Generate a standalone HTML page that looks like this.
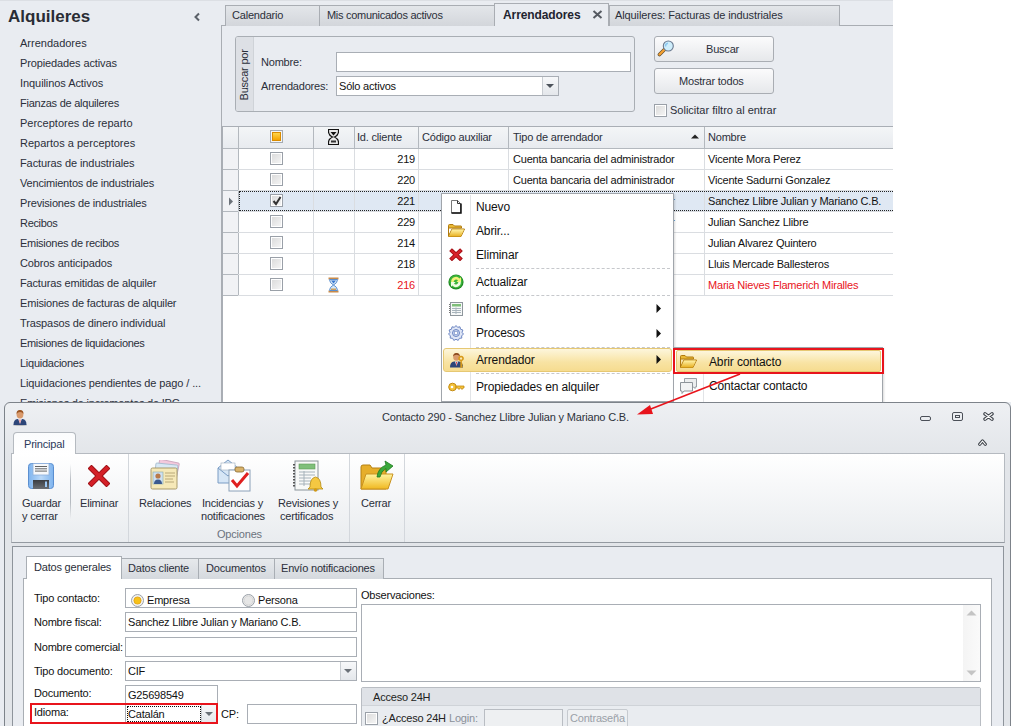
<!DOCTYPE html>
<html><head><meta charset="utf-8">
<style>
*{box-sizing:border-box;margin:0;padding:0}
html,body{width:1016px;height:726px;overflow:hidden;background:#e9ecf1;font-family:"Liberation Sans",sans-serif;font-size:11px;color:#1e1e1e;position:relative}
.a{position:absolute}
.t{position:absolute;line-height:13px;white-space:nowrap;letter-spacing:-0.2px}
.side{color:#2b2f3a}
.tab{position:absolute;top:5px;height:21px;border:1px solid #a9adb3;border-bottom:none;background:linear-gradient(#e3e6ea,#d3d6db)}
.inp{position:absolute;background:#fff;border:1px solid #a9aeb5}
.btn{position:absolute;border:1px solid #a9adb3;border-radius:3px;background:linear-gradient(#fbfbfc,#e6e8eb)}
.cb{position:absolute;width:13px;height:13px;border:1px solid #9aa0a8;background:#fff}
.cb::after{content:"";position:absolute;left:1px;top:1px;right:1px;bottom:1px;background:linear-gradient(135deg,#dcdcdc,#f4f4f4)}
</style></head><body>
<!-- top strip -->
<div class="a" style="left:0;top:0;width:893px;height:1px;background:#dcdfe4"></div>
<div class="a" style="left:893px;top:0;width:123px;height:402px;background:#fff"></div>

<!-- SIDEBAR -->
<div class="t" style="left:8px;top:7px;font-size:17px;font-weight:bold;line-height:20px;letter-spacing:0;color:#2a2d35">Alquileres</div>
<svg class="a" style="left:193px;top:12px" width="8" height="10" viewBox="0 0 8 10"><path d="M6 1.5 L2.5 5 L6 8.5" stroke="#5b6169" stroke-width="2" fill="none"/></svg>
<div class="t side" style="left:20px;top:37px;letter-spacing:0.000px">Arrendadores</div>
<div class="t side" style="left:20px;top:57px;letter-spacing:-0.117px">Propiedades activas</div>
<div class="t side" style="left:20px;top:77px;letter-spacing:-0.071px">Inquilinos Activos</div>
<div class="t side" style="left:20px;top:97px;letter-spacing:-0.240px">Fianzas de alquileres</div>
<div class="t side" style="left:20px;top:117px;letter-spacing:0.000px">Perceptores de reparto</div>
<div class="t side" style="left:20px;top:137px;letter-spacing:0.010px">Repartos a perceptores</div>
<div class="t side" style="left:20px;top:157px;letter-spacing:-0.096px">Facturas de industriales</div>
<div class="t side" style="left:20px;top:177px;letter-spacing:-0.193px">Vencimientos de industriales</div>
<div class="t side" style="left:20px;top:197px;letter-spacing:-0.158px">Previsiones de industriales</div>
<div class="t side" style="left:20px;top:217px;letter-spacing:-0.317px">Recibos</div>
<div class="t side" style="left:20px;top:237px;letter-spacing:-0.274px">Emisiones de recibos</div>
<div class="t side" style="left:20px;top:257px;letter-spacing:-0.118px">Cobros anticipados</div>
<div class="t side" style="left:20px;top:277px;letter-spacing:-0.154px">Facturas emitidas de alquiler</div>
<div class="t side" style="left:20px;top:297px;letter-spacing:-0.172px">Emisiones de facturas de alquiler</div>
<div class="t side" style="left:20px;top:317px;letter-spacing:-0.117px">Traspasos de dinero individual</div>
<div class="t side" style="left:20px;top:337px;letter-spacing:-0.316px">Emisiones de liquidaciones</div>
<div class="t side" style="left:20px;top:357px;letter-spacing:-0.258px">Liquidaciones</div>
<div class="t side" style="left:20px;top:377px;letter-spacing:-0.114px">Liquidaciones pendientes de pago / ...</div>
<div class="t side" style="left:20px;top:397px">Emisiones de incrementos de IPC</div>

<!-- TABS -->
<div class="a" style="left:221px;top:25px;width:672px;height:1px;background:#a9adb3"></div>
<div class="a" style="left:221px;top:25px;width:1px;height:377px;background:#a9adb3"></div>
<div class="tab" style="left:225px;width:95px"></div>
<div class="t" style="left:232px;top:9px;color:#2b2f3a">Calendario</div>
<div class="tab" style="left:319px;width:176px"></div>
<div class="t" style="left:327px;top:9px;letter-spacing:-0.29px;color:#2b2f3a">Mis comunicados activos</div>
<div class="tab" style="left:609px;width:231px"></div>
<div class="t" style="left:615px;top:9px;letter-spacing:-0.1px;color:#2b2f3a">Alquileres: Facturas de industriales</div>
<div class="a" style="left:494px;top:3px;width:115px;height:23px;border:1px solid #a9adb3;border-bottom:none;background:#e9ecf1"></div>
<div class="t" style="left:503px;top:8px;font-weight:bold;font-size:12px;line-height:14px;letter-spacing:-0.1px;color:#1f2430">Arrendadores</div>
<svg class="a" style="left:592px;top:10px" width="11" height="9" viewBox="0 0 11 9"><path d="M1.5 1 L9.5 8 M9.5 1 L1.5 8" stroke="#555a62" stroke-width="2"/></svg>

<!-- SEARCH GROUP -->
<div class="a" style="left:235px;top:36px;width:400px;height:76px;border:1px solid #a9aeb4;border-radius:3px"></div>
<div class="a" style="left:236px;top:37px;width:18px;height:74px;background:#dde0e5;border-right:1px solid #cfd3d8;border-radius:2px 0 0 2px"></div>
<div class="t" style="left:222px;top:72px;width:44px;transform:rotate(-90deg);color:#2b2f3a">Buscar por</div>
<div class="t" style="left:261px;top:56px;color:#2b2f3a">Nombre:</div>
<div class="t" style="left:261px;top:80px;color:#2b2f3a">Arrendadores:</div>
<div class="inp" style="left:336px;top:52px;width:295px;height:20px"></div>
<div class="inp" style="left:336px;top:76px;width:223px;height:20px"></div>
<div class="a" style="left:542px;top:77px;width:16px;height:18px;border-left:1px solid #c9cdd2;background:linear-gradient(#f7f8fa,#e4e7eb)"></div>
<svg class="a" style="left:546px;top:84px" width="8" height="5"><path d="M0 0 H8 L4 4Z" fill="#4d535b"/></svg>
<div class="t" style="left:339px;top:80px;color:#111">Sólo activos</div>

<div class="btn" style="left:654px;top:36px;width:120px;height:26px"></div>
<div class="t" style="left:706px;top:43px;color:#2b2f3a">Buscar</div>
<svg class="a" style="left:657px;top:39px" width="18" height="18" viewBox="0 0 18 18"><path d="M7.5 10.5 L2.5 15.5" stroke="#5a4a30" stroke-width="3.6" stroke-linecap="round"/><path d="M7.5 10.5 L2.5 15.5" stroke="#f5a030" stroke-width="2.4" stroke-linecap="round"/><circle cx="11.3" cy="7" r="5" fill="#cfeefc" stroke="#6a7a90" stroke-width="1.1"/><path d="M8.5 7.5 A3 3 0 0 1 11 4.3" stroke="#8cc8f0" stroke-width="1.5" fill="none"/></svg>
<div class="btn" style="left:654px;top:68px;width:120px;height:26px"></div>
<div class="t" style="left:679px;top:75px;color:#2b2f3a">Mostrar todos</div>
<div class="cb" style="left:654px;top:104px"></div>
<div class="t" style="left:670px;top:104px;letter-spacing:0;color:#2b2f3a">Solicitar filtro al entrar</div>


<!-- GRID -->
<div class="a" style="left:222px;top:126px;width:671px;height:276px;background:#fff"></div>
<div class="a" style="left:222px;top:126px;width:671px;height:23px;background:linear-gradient(#f3f5f7,#e8ebef);border-top:1px solid #a9aeb5;border-bottom:1px solid #b3b8be"></div>
<div class="a" style="left:238px;top:127px;width:1px;height:21px;background:#b3b8be"></div>
<div class="a" style="left:313px;top:127px;width:1px;height:21px;background:#b3b8be"></div>
<div class="a" style="left:354px;top:127px;width:1px;height:21px;background:#b3b8be"></div>
<div class="a" style="left:418px;top:127px;width:1px;height:21px;background:#b3b8be"></div>
<div class="a" style="left:508px;top:127px;width:1px;height:21px;background:#b3b8be"></div>
<div class="a" style="left:704px;top:127px;width:1px;height:21px;background:#b3b8be"></div>
<div class="a" style="left:223px;top:149px;width:15px;height:146px;background:#f1f2f5"></div>
<div class="a" style="left:239px;top:191px;width:654px;height:20px;background:#dfe8f3"></div>
<div class="a" style="left:238px;top:149px;width:1px;height:146px;background:#b3b8be"></div>
<div class="a" style="left:313px;top:149px;width:1px;height:146px;background:#dadde1"></div>
<div class="a" style="left:354px;top:149px;width:1px;height:146px;background:#dadde1"></div>
<div class="a" style="left:418px;top:149px;width:1px;height:146px;background:#dadde1"></div>
<div class="a" style="left:508px;top:149px;width:1px;height:146px;background:#dadde1"></div>
<div class="a" style="left:704px;top:149px;width:1px;height:146px;background:#dadde1"></div>
<div class="a" style="left:223px;top:169px;width:670px;height:1px;background:#dadde1"></div>
<div class="a" style="left:223px;top:190px;width:670px;height:1px;background:#dadde1"></div>
<div class="a" style="left:223px;top:211px;width:670px;height:1px;background:#dadde1"></div>
<div class="a" style="left:223px;top:232px;width:670px;height:1px;background:#dadde1"></div>
<div class="a" style="left:223px;top:253px;width:670px;height:1px;background:#dadde1"></div>
<div class="a" style="left:223px;top:274px;width:670px;height:1px;background:#dadde1"></div>
<div class="a" style="left:223px;top:295px;width:670px;height:1px;background:#dadde1"></div>
<div class="a" style="left:223px;top:169px;width:15px;height:1px;background:#b3b8be"></div>
<div class="a" style="left:223px;top:190px;width:15px;height:1px;background:#b3b8be"></div>
<div class="a" style="left:223px;top:211px;width:15px;height:1px;background:#b3b8be"></div>
<div class="a" style="left:223px;top:232px;width:15px;height:1px;background:#b3b8be"></div>
<div class="a" style="left:223px;top:253px;width:15px;height:1px;background:#b3b8be"></div>
<div class="a" style="left:223px;top:274px;width:15px;height:1px;background:#b3b8be"></div>
<div class="a" style="left:223px;top:295px;width:15px;height:1px;background:#b3b8be"></div>
<div class="a" style="left:222px;top:126px;width:1px;height:276px;background:#a9aeb5"></div>
<div class="a" style="left:239px;top:191px;width:654px;height:20px;border-top:1px dotted #222;border-bottom:1px dotted #222;border-left:1px dotted #222"></div>
<svg class="a" style="left:228px;top:197px" width="6" height="9"><path d="M1 0.5 L5 4.5 L1 8.5Z" fill="#6b7178"/></svg>
<div class="t" style="left:357px;top:131px;color:#2b2f3a">Id. cliente</div>
<div class="t" style="left:422px;top:131px;color:#2b2f3a">Código auxiliar</div>
<div class="t" style="left:513px;top:131px;color:#2b2f3a">Tipo de arrendador</div>
<svg class="a" style="left:691px;top:134px" width="8" height="5"><path d="M0 4.5 H8 L4 0.5Z" fill="#222"/></svg>
<div class="t" style="left:708px;top:131px;color:#2b2f3a">Nombre</div>
<div class="a" style="left:270px;top:130px;width:13px;height:13px;border:1px solid #a4aab2;background:#f5f5f5"></div>
<div class="a" style="left:272px;top:132px;width:9px;height:9px;background:linear-gradient(#ffd54a,#f5a300);border:1px solid #d98c00"></div>
<svg class="a" style="left:328px;top:129px" width="11" height="16" viewBox="0 0 11 16"><path d="M0.5 0.5 H10.5 V2.5 Q10.5 6 6.5 8 Q10.5 10 10.5 13.5 V15.5 H0.5 V13.5 Q0.5 10 4.5 8 Q0.5 6 0.5 2.5Z" fill="#e8e8e8" stroke="#111" stroke-width="1.2"/><path d="M2.5 3 H8.5 L5.5 6.5Z" fill="#111"/><rect x="3" y="11.5" width="5" height="2" fill="#333"/></svg>
<svg class="a" style="left:328px;top:277px" width="11" height="16" viewBox="0 0 11 16"><rect x="0.5" y="0.5" width="10" height="2" fill="#c98b4a"/><rect x="0.5" y="13.5" width="10" height="2" fill="#c98b4a"/><path d="M1.5 2.5 H9.5 Q9.5 6 5.5 8 Q1.5 10 1.5 13.5 H9.5 Q9.5 10 5.5 8 Q1.5 6 1.5 2.5Z" fill="#d8e8f7" stroke="#5a8fd0" stroke-width="1"/><path d="M3 3.5 H8 L5.5 6.5Z" fill="#3a78d0"/><rect x="3" y="11.5" width="5" height="1.5" fill="#c9a060"/></svg>
<div class="t" style="left:354px;width:61px;text-align:right;top:153px;color:#111">219</div>
<div class="t" style="left:513px;top:153px;color:#111">Cuenta bancaria del administrador</div>
<div class="t" style="left:708px;top:153px;color:#111">Vicente Mora Perez</div>
<div class="cb" style="left:270px;top:152px"></div>
<div class="t" style="left:354px;width:61px;text-align:right;top:174px;color:#111">220</div>
<div class="t" style="left:513px;top:174px;color:#111">Cuenta bancaria del administrador</div>
<div class="t" style="left:708px;top:174px;color:#111">Vicente Sadurni Gonzalez</div>
<div class="cb" style="left:270px;top:173px"></div>
<div class="t" style="left:354px;width:61px;text-align:right;top:195px;color:#111">221</div>
<div class="t" style="left:513px;top:195px;color:#111">Cuenta bancaria del administrador</div>
<div class="t" style="left:708px;top:195px;color:#111">Sanchez Llibre Julian y Mariano C.B.</div>
<div class="cb" style="left:270px;top:194px"></div>
<svg class="a" style="left:272px;top:196px" width="10" height="10"><path d="M1.5 5 L4 8 L8.5 1" stroke="#333" stroke-width="2" fill="none"/></svg>
<div class="t" style="left:354px;width:61px;text-align:right;top:216px;color:#111">229</div>
<div class="t" style="left:513px;top:216px;color:#111">Cuenta bancaria del administrador</div>
<div class="t" style="left:708px;top:216px;color:#111">Julian Sanchez Llibre</div>
<div class="cb" style="left:270px;top:215px"></div>
<div class="t" style="left:354px;width:61px;text-align:right;top:237px;color:#111">214</div>
<div class="t" style="left:708px;top:237px;color:#111">Julian Alvarez Quintero</div>
<div class="cb" style="left:270px;top:236px"></div>
<div class="t" style="left:354px;width:61px;text-align:right;top:258px;color:#111">218</div>
<div class="t" style="left:708px;top:258px;color:#111">Lluis Mercade Ballesteros</div>
<div class="cb" style="left:270px;top:257px"></div>
<div class="t" style="left:354px;width:61px;text-align:right;top:279px;color:#e8141c">216</div>
<div class="t" style="left:708px;top:279px;color:#e8141c">Maria Nieves Flamerich Miralles</div>
<div class="cb" style="left:270px;top:278px"></div>
<!-- CONTEXT MENU -->
<div class="a" style="left:441px;top:193px;width:233px;height:209px;background:#fff;border:1px solid #a0a5ab;box-shadow:1px 1px 2px rgba(0,0,0,0.15)"></div>
<div class="a" style="left:470px;top:195px;width:1px;height:206px;background:#e2e4e7"></div>
<div class="a" style="left:476px;top:268px;width:194px;height:0;border-top:1px dashed #c6c8cc"></div>
<div class="a" style="left:476px;top:295px;width:194px;height:0;border-top:1px dashed #c6c8cc"></div>
<div class="a" style="left:476px;top:347px;width:194px;height:0;border-top:1px dashed #c6c8cc"></div>
<div class="a" style="left:476px;top:373px;width:194px;height:0;border-top:1px dashed #c6c8cc"></div>
<div class="a" style="left:443px;top:348px;width:229px;height:24px;border:1px solid #e6c873;border-radius:3px;background:linear-gradient(#fdf6dc,#f8e3a3 60%,#f6dc90)"></div>
<div class="t" style="left:476px;top:200px;font-size:12px;line-height:14px;letter-spacing:-0.13px;color:#111">Nuevo</div>
<div class="t" style="left:476px;top:224px;font-size:12px;line-height:14px;letter-spacing:-0.13px;color:#111">Abrir...</div>
<div class="t" style="left:476px;top:248px;font-size:12px;line-height:14px;letter-spacing:-0.13px;color:#111">Eliminar</div>
<div class="t" style="left:476px;top:275px;font-size:12px;line-height:14px;letter-spacing:-0.13px;color:#111">Actualizar</div>
<div class="t" style="left:476px;top:302px;font-size:12px;line-height:14px;letter-spacing:-0.13px;color:#111">Informes</div>
<div class="t" style="left:476px;top:326px;font-size:12px;line-height:14px;letter-spacing:-0.13px;color:#111">Procesos</div>
<div class="t" style="left:476px;top:353px;font-size:12px;line-height:14px;letter-spacing:-0.13px;color:#111">Arrendador</div>
<div class="t" style="left:476px;top:380px;font-size:12px;line-height:14px;letter-spacing:-0.13px;color:#111">Propiedades en alquiler</div>
<svg class="a" style="left:656px;top:304px" width="6" height="9"><path d="M0.5 0 L5 4.5 L0.5 9Z" fill="#111"/></svg>
<svg class="a" style="left:656px;top:329px" width="6" height="9"><path d="M0.5 0 L5 4.5 L0.5 9Z" fill="#111"/></svg>
<svg class="a" style="left:656px;top:355px" width="6" height="9"><path d="M0.5 0 L5 4.5 L0.5 9Z" fill="#111"/></svg>
<svg class="a" style="left:451px;top:200px" width="11" height="14" viewBox="0 0 11 14"><path d="M0.5 0.5 H6.5 L9.5 3.5 V13 H0.5Z" fill="#fff" stroke="#777" stroke-width="1"/><path d="M0.5 13 H10 V3.5" stroke="#111" stroke-width="1.5" fill="none"/><path d="M6.5 0.5 V3.5 H9.5" stroke="#333" fill="none"/></svg>
<svg class="a" style="left:448px;top:224px" width="17" height="13" viewBox="0 0 17 13"><path d="M0.5 1.5 Q0.5 0.5 1.5 0.5 H5 L6.5 2 H13 Q13.5 2 13.5 2.5 V4 H0.5Z" fill="#e9b935" stroke="#b07a10" stroke-width="1"/><path d="M0.5 3 V12.5 H13 L16.5 5 H4 L0.5 12" fill="#f2c94a" stroke="#b07a10" stroke-width="1"/><path d="M1 12.5 L4 5.5 H16 L12.8 12.5Z" fill="url(#fg)"/><defs><linearGradient id="fg" x1="0" y1="0" x2="0" y2="1"><stop offset="0" stop-color="#fff3a8"/><stop offset="1" stop-color="#e8b020"/></linearGradient></defs></svg>
<svg class="a" style="left:449px;top:248px" width="14" height="13" viewBox="0 0 14 13"><path d="M3 3 L11 10.5 M11 3 L3 10.5" stroke="#a51016" stroke-width="4" stroke-linecap="square"/><path d="M3 3 L11 10.5 M11 3 L3 10.5" stroke="#d8222a" stroke-width="2.2" stroke-linecap="square"/></svg>
<svg class="a" style="left:448px;top:274px" width="16" height="16" viewBox="0 0 16 16"><circle cx="8" cy="8" r="7.6" fill="#1f8a22"/><circle cx="8" cy="7.6" r="6.6" fill="#3cb43a"/><path d="M3.2 8.2 A4.8 4.8 0 0 1 11.6 4.6 L13 3.2 V8 H8.4 L10 6.3 A2.6 2.6 0 0 0 5.6 8.2Z" fill="#f4f27a"/><path d="M12.8 7.8 A4.8 4.8 0 0 1 4.4 11.4 L3 12.8 V8 H7.6 L6 9.7 A2.6 2.6 0 0 0 10.4 7.8Z" fill="#f0fbe0"/></svg>
<svg class="a" style="left:449px;top:302px" width="14" height="14" viewBox="0 0 14 14"><rect x="1.5" y="0.5" width="12" height="13" fill="#f6f8f8" stroke="#8e969c"/><rect x="3" y="2" width="9" height="2.5" fill="#7fbf7a"/><path d="M3 6.5H12M3 8.5H12M3 10.5H12M7 5.5V12" stroke="#a8b4bc" stroke-width="1"/><path d="M0.5 2V12" stroke="#777" stroke-dasharray="1 1"/></svg>
<svg class="a" style="left:448px;top:325px" width="16" height="16" viewBox="0 0 16 16"><path d="M8 0.5 L9.6 2.3 L12 1.8 L12.5 4.2 L14.9 5 L14 7.3 L15.5 9.2 L13.6 10.7 L13.8 13.1 L11.4 13.3 L10.2 15.4 L8 14.3 L5.8 15.4 L4.6 13.3 L2.2 13.1 L2.4 10.7 L0.5 9.2 L2 7.3 L1.1 5 L3.5 4.2 L4 1.8 L6.4 2.3Z" fill="#dfe6f6" stroke="#6d86c2" stroke-width="1"/><circle cx="8" cy="8" r="3.5" fill="#c9d5ef" stroke="#6d86c2"/><rect x="6.5" y="6.5" width="3" height="3" fill="#fff" stroke="#8aa0d0" stroke-width="0.8"/></svg>
<svg class="a" style="left:449px;top:352px" width="16" height="16" viewBox="0 0 16 16"><path d="M1 15.5 Q1 10 5 9.5 H10 Q14 10 14 15.5Z" fill="#2d4679"/><path d="M6 9.5 L7.5 14 L9 9.5Z" fill="#fff"/><path d="M7 10 L7.5 14.5 L8 10Z" fill="#d8232a"/><ellipse cx="7.5" cy="5" rx="3.3" ry="3.8" fill="#d99a6c"/><path d="M4.2 4.5 Q4 1 7.5 1 Q11 1 10.8 4.5 Q10 2.8 7.5 2.8 Q5 2.8 4.2 4.5Z" fill="#8c4a1e"/><path d="M12 8.5 a2 2 0 1 1 0.1 0 V15 L13.5 14 M12 12.5 H13.5" stroke="#d89a1a" stroke-width="1.6" fill="none"/></svg>
<svg class="a" style="left:448px;top:382px" width="17" height="10" viewBox="0 0 17 10"><circle cx="4.5" cy="5" r="3.8" fill="#f3c23a" stroke="#c48a10" stroke-width="1"/><circle cx="4" cy="5" r="1.3" fill="#fff"/><path d="M8 4 H16 V6 H15 L14 7.5 L13 6 H12 L11 7.5 L10 6 H8Z" fill="#f3c23a" stroke="#c48a10" stroke-width="0.8"/></svg>
<div class="a" style="left:673px;top:347px;width:210px;height:56px;background:#fff;border:1px solid #a0a5ab;box-shadow:1px 1px 2px rgba(0,0,0,0.15)"></div>
<div class="a" style="left:703px;top:349px;width:1px;height:53px;background:#e2e4e7"></div>
<div class="a" style="left:676px;top:350px;width:205px;height:22px;border:1px solid #e6c873;border-radius:2px;background:linear-gradient(#fdf6dc,#f8e3a3 60%,#f6dc90)"></div>
<svg class="a" style="left:680px;top:355px" width="17" height="13" viewBox="0 0 17 13"><path d="M0.5 1.5 Q0.5 0.5 1.5 0.5 H5 L6.5 2 H13 Q13.5 2 13.5 2.5 V4 H0.5Z" fill="#e9b935" stroke="#b07a10" stroke-width="1"/><path d="M0.5 3 V12.5 H13 L16.5 5 H4 L0.5 12" fill="#f2c94a" stroke="#b07a10" stroke-width="1"/><path d="M1 12.5 L4 5.5 H16 L12.8 12.5Z" fill="url(#fg)"/><defs><linearGradient id="fg" x1="0" y1="0" x2="0" y2="1"><stop offset="0" stop-color="#fff3a8"/><stop offset="1" stop-color="#e8b020"/></linearGradient></defs></svg>
<svg class="a" style="left:680px;top:378px" width="18" height="16" viewBox="0 0 18 16"><path d="M4.5 0.5 H16.5 V9 H15 V10.5 L13.5 9 H4.5Z" fill="#eceeef" stroke="#9aa0a6"/><path d="M0.5 4.5 H12.5 V13 H4 L2 15.5 V13 H0.5Z" fill="#f2f3f4" stroke="#8e949a"/></svg>
<div class="t" style="left:709px;top:355px;font-size:12px;line-height:14px;letter-spacing:-0.13px;color:#111">Abrir contacto</div>
<div class="t" style="left:709px;top:379px;font-size:12px;line-height:14px;letter-spacing:-0.13px;color:#111">Contactar contacto</div>
<div class="a" style="left:673px;top:348px;width:211px;height:26px;border:2px solid #e8141c"></div>
<!-- WINDOW -->
<div class="a" style="left:1011px;top:402px;width:5px;height:324px;background:#fff"></div>
<div class="a" style="left:4px;top:402px;width:1007px;height:330px;border:1px solid #7d838a;border-radius:6px 6px 0 0;background:linear-gradient(#eef0f3,#e3e6ea 50px,#e2e5e9 60px)"></div>
<svg class="a" style="left:12px;top:409px" width="16" height="17" viewBox="0 0 16 17"><ellipse cx="8" cy="16" rx="7" ry="1" fill="rgba(0,0,0,0.2)"/><path d="M1.5 16 Q1.5 10.5 5.5 10 H10.5 Q14.5 10.5 14.5 16Z" fill="#2d4679"/><path d="M6.2 10 L8 15 L9.8 10Z" fill="#fff"/><path d="M7.5 10.5 L8 15.5 L8.5 10.5Z" fill="#d8232a"/><ellipse cx="8" cy="5.5" rx="3.4" ry="4" fill="#d99a6c"/><path d="M4.6 5 Q4.3 1 8 1 Q11.7 1 11.4 5 Q10.5 3 8 3 Q5.5 3 4.6 5Z" fill="#9a5422"/></svg>
<div class="t" style="left:382px;top:411px;letter-spacing:-0.17px;color:#2e333b">Contacto 290 - Sanchez Llibre Julian y Mariano C.B.</div>
<div class="a" style="left:920px;top:416px;width:11px;height:5px;border:1.5px solid #4b5058;border-radius:2px"></div>
<div class="a" style="left:952px;top:412px;width:11px;height:9px;border:1.5px solid #4b5058;border-radius:2px"></div>
<div class="a" style="left:955px;top:415px;width:5px;height:3px;border:1.2px solid #4b5058"></div>
<svg class="a" style="left:983px;top:412px" width="11" height="9" viewBox="0 0 11 9"><path d="M2 1.8 L9 7.2 M9 1.8 L2 7.2" stroke="#3f444b" stroke-width="3.4" stroke-linecap="round"/><path d="M2 1.8 L9 7.2 M9 1.8 L2 7.2" stroke="#fff" stroke-width="1.3" stroke-linecap="round"/></svg>
<svg class="a" style="left:978px;top:439px" width="9" height="7" viewBox="0 0 9 7"><path d="M1.7 5.3 L4.5 2 L7.3 5.3" stroke="#3f444b" stroke-width="3.2" fill="none" stroke-linejoin="round" stroke-linecap="round"/><path d="M1.7 5.3 L4.5 2 L7.3 5.3" stroke="#fff" stroke-width="1.1" fill="none" stroke-linecap="round"/></svg>
<div class="a" style="left:11px;top:453px;width:994px;height:90px;border:1px solid #b5bac0;border-bottom-color:#949aa1;background:linear-gradient(#ffffff,#f7f8f9 35%,#e9ecef)"></div>
<div class="a" style="left:13px;top:432px;width:63px;height:22px;border:1px solid #b5bac0;border-bottom:none;border-radius:4px 4px 0 0;background:linear-gradient(#fbfcfd,#ffffff)"></div>
<div class="t" style="left:24px;top:438px;color:#2b3a5a">Principal</div>
<div class="a" style="left:70px;top:464px;width:1px;height:55px;background:linear-gradient(rgba(180,185,192,0),#b5bac0 30%,#b5bac0 70%,rgba(180,185,192,0))"></div>
<div class="a" style="left:128px;top:454px;width:1px;height:88px;background:#d3d7dc"></div>
<div class="a" style="left:349px;top:454px;width:1px;height:88px;background:#d3d7dc"></div>
<div class="a" style="left:404px;top:454px;width:1px;height:88px;background:#d3d7dc"></div>
<div class="t" style="left:22px;top:497px;color:#2b2f3a">Guardar</div>
<div class="t" style="left:22px;top:510px;color:#2b2f3a">y cerrar</div>
<div class="t" style="left:80px;top:497px;color:#2b2f3a">Eliminar</div>
<div class="t" style="left:139px;top:497px;color:#2b2f3a">Relaciones</div>
<div class="t" style="left:202px;top:497px;color:#2b2f3a">Incidencias y</div>
<div class="t" style="left:201px;top:510px;color:#2b2f3a">notificaciones</div>
<div class="t" style="left:278px;top:497px;color:#2b2f3a">Revisiones y</div>
<div class="t" style="left:280px;top:510px;color:#2b2f3a">certificados</div>
<div class="t" style="left:361px;top:497px;color:#2b2f3a">Cerrar</div>
<div class="t" style="left:217px;top:528px;color:#6b737d">Opciones</div>
<svg class="a" style="left:28px;top:463px" width="26" height="26" viewBox="0 0 26 26"><rect x="0.5" y="0.5" width="25" height="25" rx="3" fill="url(#sv)" stroke="#5b8fd0"/><rect x="5" y="0.5" width="16" height="11.5" fill="#f6f8fb" stroke="#8eb0dc" stroke-width="0.8"/><path d="M7 3.5H19M7 5.8H19M7 8.1H19" stroke="#555" stroke-width="0.9"/><rect x="5" y="17" width="16" height="9" fill="url(#sd)"/><rect x="17" y="18.5" width="2" height="5.5" fill="#9cc8f5"/><defs><linearGradient id="sv" x1="0" y1="0" x2="1" y2="0"><stop offset="0" stop-color="#7fb4ee"/><stop offset="0.5" stop-color="#b9d8f8"/><stop offset="1" stop-color="#7fb4ee"/></linearGradient><linearGradient id="sd" x1="0" y1="0" x2="0" y2="1"><stop offset="0" stop-color="#3a3d42"/><stop offset="1" stop-color="#6a6e74"/></linearGradient></defs></svg>
<svg class="a" style="left:88px;top:465px" width="22" height="22" viewBox="0 0 22 22"><path d="M3.5 3.5 L18.5 18.5 M18.5 3.5 L3.5 18.5" stroke="#9c1015" stroke-width="5.6" stroke-linecap="square"/><path d="M3.5 3.5 L18.5 18.5 M18.5 3.5 L3.5 18.5" stroke="#d42027" stroke-width="3.8" stroke-linecap="square"/></svg>
<svg class="a" style="left:149px;top:460px" width="32" height="31" viewBox="0 0 32 31"><rect x="9" y="1" width="20" height="16" rx="1" transform="rotate(12 19 9)" fill="#f3c9dc" stroke="#c9a0b8" stroke-width="0.8"/><rect x="6" y="4" width="22" height="18" rx="1" transform="rotate(6 17 13)" fill="#d8e8f5" stroke="#a0b8cc" stroke-width="0.8"/><rect x="2" y="8" width="26" height="21" rx="1.5" fill="#f6e9b8" stroke="#a99a6a" stroke-width="1"/><rect x="4" y="12" width="10" height="12" fill="#cfe0f0" stroke="#8aa" stroke-width="0.6"/><circle cx="9" cy="16" r="2.6" fill="#b97a4a"/><path d="M5 24 Q5 19.5 9 19.5 Q13 19.5 13 24Z" fill="#3b5a90"/><path d="M16 13H26M16 16H26M16 19H24M16 22H25" stroke="#b8a878" stroke-width="1"/></svg>
<svg class="a" style="left:217px;top:459px" width="34" height="33" viewBox="0 0 34 33"><path d="M1 9 L11 1 L21 9 V24 H1Z" fill="#d6e6f6" stroke="#7a9cc4"/><path d="M1 9 L11 17 L21 9" fill="none" stroke="#7a9cc4"/><rect x="4" y="4" width="14" height="7" fill="#fff" stroke="#9ab" stroke-width="0.6"/><rect x="12" y="11" width="21" height="21" fill="#fff" stroke="#8aa0b8"/><rect x="18" y="8" width="9" height="5" rx="2" fill="#d9b36a" stroke="#8a6a30" stroke-width="0.8"/><path d="M15 21 L20 27 L31 14" stroke="#e02020" stroke-width="3" fill="none"/></svg>
<svg class="a" style="left:293px;top:460px" width="32" height="32" viewBox="0 0 32 32"><rect x="2" y="1" width="23" height="29" fill="#f8f9f8" stroke="#8a9499"/><path d="M1 4V28" stroke="#555" stroke-width="2" stroke-dasharray="1.5 1.5"/><rect x="6" y="4" width="16" height="5" fill="#7fbf7a" stroke="#5c9a58" stroke-width="0.6"/><path d="M6 12H22M6 15H22M6 18H18M6 21H18M6 24H18M11 11V26" stroke="#a6b2ba" stroke-width="1"/><path d="M17 27 Q17 18 22.5 17 Q28 18 28 27 L30 29 H15Z" fill="#f5c842" stroke="#b58a10" stroke-width="0.8"/><circle cx="22.5" cy="30" r="1.8" fill="#d19a18"/></svg>
<svg class="a" style="left:360px;top:459px" width="34" height="33" viewBox="0 0 34 33"><path d="M1 8 Q1 6 3 6 H10 L12 9 H24 Q26 9 26 11 V30 H1Z" fill="#e6ae2a" stroke="#b58010"/><path d="M1 30 L6 15 H33 L28 30Z" fill="url(#cg)" stroke="#c99220" stroke-width="1"/><path d="M17 18 Q18 9 26 6 L25 2 L33 7 L26 13 L26 9.5 Q21 12 20 18Z" fill="#3aa83a" stroke="#1e7a1e" stroke-width="0.8"/><defs><linearGradient id="cg" x1="0" y1="0" x2="0" y2="1"><stop offset="0" stop-color="#fff4a0"/><stop offset="1" stop-color="#f0b820"/></linearGradient></defs></svg>
<div class="a" style="left:12px;top:546px;width:992px;height:190px;border:1px solid #8e949b;background:#e9ecf1"></div>
<div class="a" style="left:23px;top:578px;width:969px;height:160px;border:1px solid #a9aeb4;background:#fff"></div>
<div class="a" style="left:121px;top:558px;width:78px;height:21px;border:1px solid #a9aeb4;border-bottom:none;background:linear-gradient(#e6e9ec,#d5d9de)"></div><div class="t" style="left:128px;top:562px;color:#2b2f3a">Datos cliente</div>
<div class="a" style="left:198px;top:558px;width:77px;height:21px;border:1px solid #a9aeb4;border-bottom:none;background:linear-gradient(#e6e9ec,#d5d9de)"></div><div class="t" style="left:206px;top:562px;color:#2b2f3a">Documentos</div>
<div class="a" style="left:274px;top:558px;width:110px;height:21px;border:1px solid #a9aeb4;border-bottom:none;background:linear-gradient(#e6e9ec,#d5d9de)"></div><div class="t" style="left:281px;top:562px;color:#2b2f3a">Envío notificaciones</div>
<div class="a" style="left:26px;top:556px;width:96px;height:23px;border:1px solid #a9aeb4;border-bottom:none;background:#fff"></div>
<div class="t" style="left:34px;top:561px;color:#2b2f3a">Datos generales</div>
<div class="t" style="left:34px;top:592px;color:#111">Tipo contacto:</div>
<div class="t" style="left:34px;top:616px;color:#111">Nombre fiscal:</div>
<div class="t" style="left:34px;top:641px;color:#111">Nombre comercial:</div>
<div class="t" style="left:34px;top:665px;color:#111">Tipo documento:</div>
<div class="t" style="left:34px;top:687px;color:#111">Documento:</div>
<div class="t" style="left:34px;top:706px;color:#111">Idioma:</div>
<div class="a" style="left:125px;top:588px;width:232px;height:20px;border:1px solid #a9aeb5;background:#fff"></div>
<div class="a" style="left:125px;top:612px;width:232px;height:20px;border:1px solid #a9aeb5;background:#fff"></div>
<div class="a" style="left:125px;top:637px;width:232px;height:20px;border:1px solid #a9aeb5;background:#fff"></div>
<div class="a" style="left:125px;top:661px;width:232px;height:20px;border:1px solid #a9aeb5;background:#fff"></div>
<div class="a" style="left:340px;top:662px;width:16px;height:18px;border-left:1px solid #c9cdd2;background:linear-gradient(#f7f8fa,#e4e7eb)"></div>
<svg class="a" style="left:344px;top:669px" width="8" height="5"><path d="M0 0 H8 L4 4Z" fill="#6b7178"/></svg>
<div class="a" style="left:125px;top:685px;width:93px;height:20px;border:1px solid #a9aeb5;background:#fff"></div>
<div class="a" style="left:125px;top:704px;width:92px;height:20px;border:1px solid #a9aeb5;background:#fff"></div>
<div class="a" style="left:127px;top:706px;width:74px;height:16px;border:1px dotted #111"></div>
<div class="a" style="left:201px;top:705px;width:15px;height:18px;border-left:1px solid #c9cdd2;background:linear-gradient(#f7f8fa,#e4e7eb)"></div>
<svg class="a" style="left:205px;top:712px" width="8" height="5"><path d="M0 0 H8 L4 4Z" fill="#6b7178"/></svg>
<div class="t" style="left:221px;top:708px;color:#111">CP:</div>
<div class="a" style="left:247px;top:704px;width:110px;height:20px;border:1px solid #a9aeb5;background:#fff"></div>
<svg class="a" style="left:131px;top:594px" width="13" height="13" viewBox="0 0 13 13"><circle cx="6.5" cy="6.5" r="6" fill="#f2f2f2" stroke="#9aa0a8"/><circle cx="6.5" cy="6.5" r="3.6" fill="#f7c21a" stroke="#e0a010" stroke-width="0.8"/></svg>
<div class="t" style="left:147px;top:594px;color:#111">Empresa</div>
<svg class="a" style="left:242px;top:594px" width="13" height="13" viewBox="0 0 13 13"><circle cx="6.5" cy="6.5" r="6" fill="#ececec" stroke="#9aa0a8"/><circle cx="6.5" cy="6.5" r="4.5" fill="#e6e6e6" stroke="#d0d0d0" stroke-width="0.8"/></svg>
<div class="t" style="left:258px;top:594px;color:#111">Persona</div>
<div class="t" style="left:128px;top:616px;color:#111">Sanchez Llibre Julian y Mariano C.B.</div>
<div class="t" style="left:128px;top:665px;color:#111">CIF</div>
<div class="t" style="left:128px;top:689px;color:#111">G25698549</div>
<div class="t" style="left:128px;top:708px;color:#111">Catalán</div>
<div class="a" style="left:30px;top:703px;width:188px;height:21px;border:2px solid #e8141c"></div>
<div class="t" style="left:361px;top:589px;color:#111">Observaciones:</div>
<div class="a" style="left:361px;top:604px;width:620px;height:78px;border:1px solid #a9aeb5;background:#fff"></div>
<div class="a" style="left:963px;top:605px;width:17px;height:76px;background:linear-gradient(90deg,#f4f4f4,#fafafa)"></div>
<svg class="a" style="left:966px;top:610px" width="11" height="6"><path d="M0.5 5.5 H10.5 L5.5 0.5Z" fill="#c4c4c4"/></svg>
<svg class="a" style="left:966px;top:670px" width="11" height="6"><path d="M0.5 0.5 H10.5 L5.5 5.5Z" fill="#c4c4c4"/></svg>
<div class="a" style="left:361px;top:687px;width:620px;height:50px;border:1px solid #b9bdc3;border-radius:2px;background:#e9ecf0"></div>
<div class="a" style="left:362px;top:688px;width:618px;height:18px;background:#dfe2e7;border-bottom:1px solid #cfd3d8"></div>
<div class="t" style="left:373px;top:691px;color:#222">Acceso 24H</div>
<div class="cb" style="left:365px;top:712px"></div>
<div class="t" style="left:382px;top:712px;color:#222">¿Acceso 24H</div>
<div class="t" style="left:449px;top:712px;color:#8a9099">Login:</div>
<div class="a" style="left:484px;top:709px;width:79px;height:20px;border:1px solid #b9bdc3;background:#eef0f2"></div>
<div class="a" style="left:567px;top:709px;width:61px;height:20px;border:1px solid #c6cacf;border-radius:2px;background:#eef0f2"></div>
<div class="t" style="left:570px;top:712px;color:#9aa0a8">Contraseña</div>
<svg class="a" style="left:600px;top:360px" width="160" height="70" viewBox="600 360 160 70"><path d="M740 374 L647 410.5" stroke="#e8141c" stroke-width="1.6"/><path d="M637 414.5 L650 405 L653 414Z" fill="#e8141c"/></svg>
</body></html>
